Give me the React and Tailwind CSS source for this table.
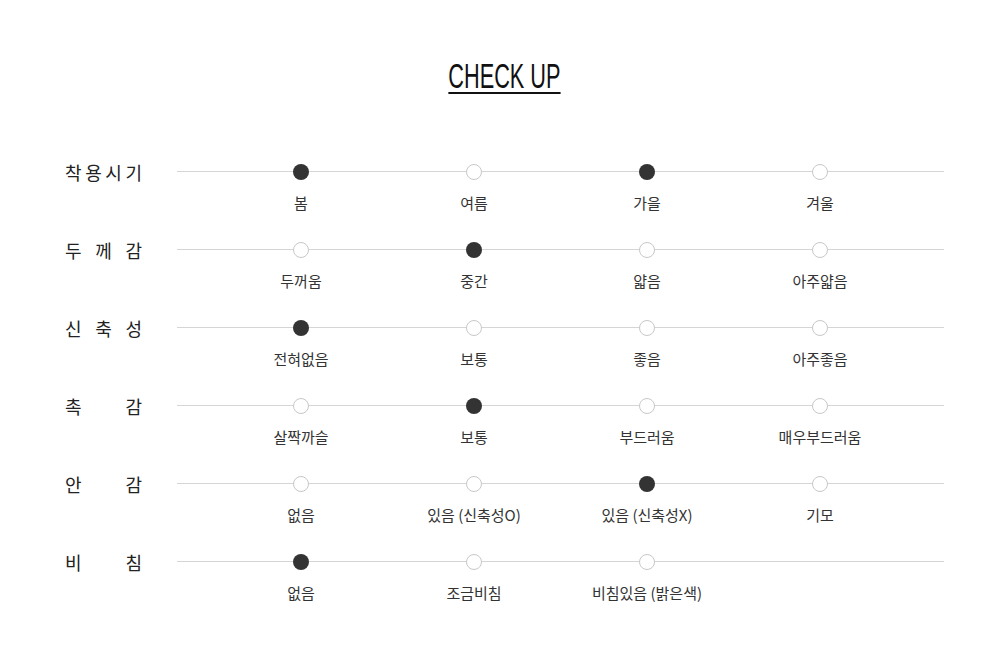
import React from "react";

const rows = [
  { label: ["착", "용", "시", "기"], options: ["봄", "여름", "가을", "겨울"], checked: [0, 2] },
  { label: ["두", "께", "감"], options: ["두꺼움", "중간", "얇음", "아주얇음"], checked: [1] },
  { label: ["신", "축", "성"], options: ["전혀없음", "보통", "좋음", "아주좋음"], checked: [0] },
  { label: ["촉", "감"], options: ["살짝까슬", "보통", "부드러움", "매우부드러움"], checked: [1] },
  { label: ["안", "감"], options: ["없음", "있음 (신축성O)", "있음 (신축성X)", "기모"], checked: [2] },
  { label: ["비", "침"], options: ["없음", "조금비침", "비침있음 (밝은색)"], checked: [0] },
];

function CheckRow({ row }) {
  return (
    <div className="flex">
      <div className="w-[112px] shrink-0">
        <div className="flex w-[77px] justify-between text-[18px] leading-[16px] text-[#222]">
          {row.label.map((c, i) => (
            <span key={i}>{c}</span>
          ))}
        </div>
      </div>
      <div className="relative flex-1 px-[37.5px]">
        <div className="absolute left-0 right-0 top-[7px] h-px bg-[#d5d5d5]" />
        <div className="relative grid grid-cols-4">
          {row.options.map((opt, i) => (
            <div key={i} className="flex flex-col items-center">
              {row.checked.includes(i) ? (
                <span className="h-4 w-4 rounded-full bg-[#333]" />
              ) : (
                <span className="h-4 w-4 rounded-full border border-[#c8c8c8] bg-white" />
              )}
              <span className="mt-3 text-[15px] leading-[22px] text-[#333] whitespace-nowrap">
                {opt}
              </span>
            </div>
          ))}
        </div>
      </div>
    </div>
  );
}

export default function App() {
  return (
    <div
      className="min-h-[661px] bg-white"
      style={{ fontFamily: '"Noto Sans CJK KR", "Noto Sans", sans-serif' }}
    >
      <div className="ml-[65px] w-[879px] pt-[60px]">
        <div className="flex justify-center">
          <h2
            className="scale-x-[0.62] border-b-2 border-[#111] text-[35px] leading-[32px] text-[#111]"
            style={{ fontFamily: '"Liberation Sans", Arial, sans-serif' }}
          >
            CHECK UP
          </h2>
        </div>
        <div className="mt-[70px] flex flex-col gap-[28px]">
          {rows.map((row, i) => (
            <CheckRow key={i} row={row} />
          ))}
        </div>
      </div>
    </div>
  );
}
